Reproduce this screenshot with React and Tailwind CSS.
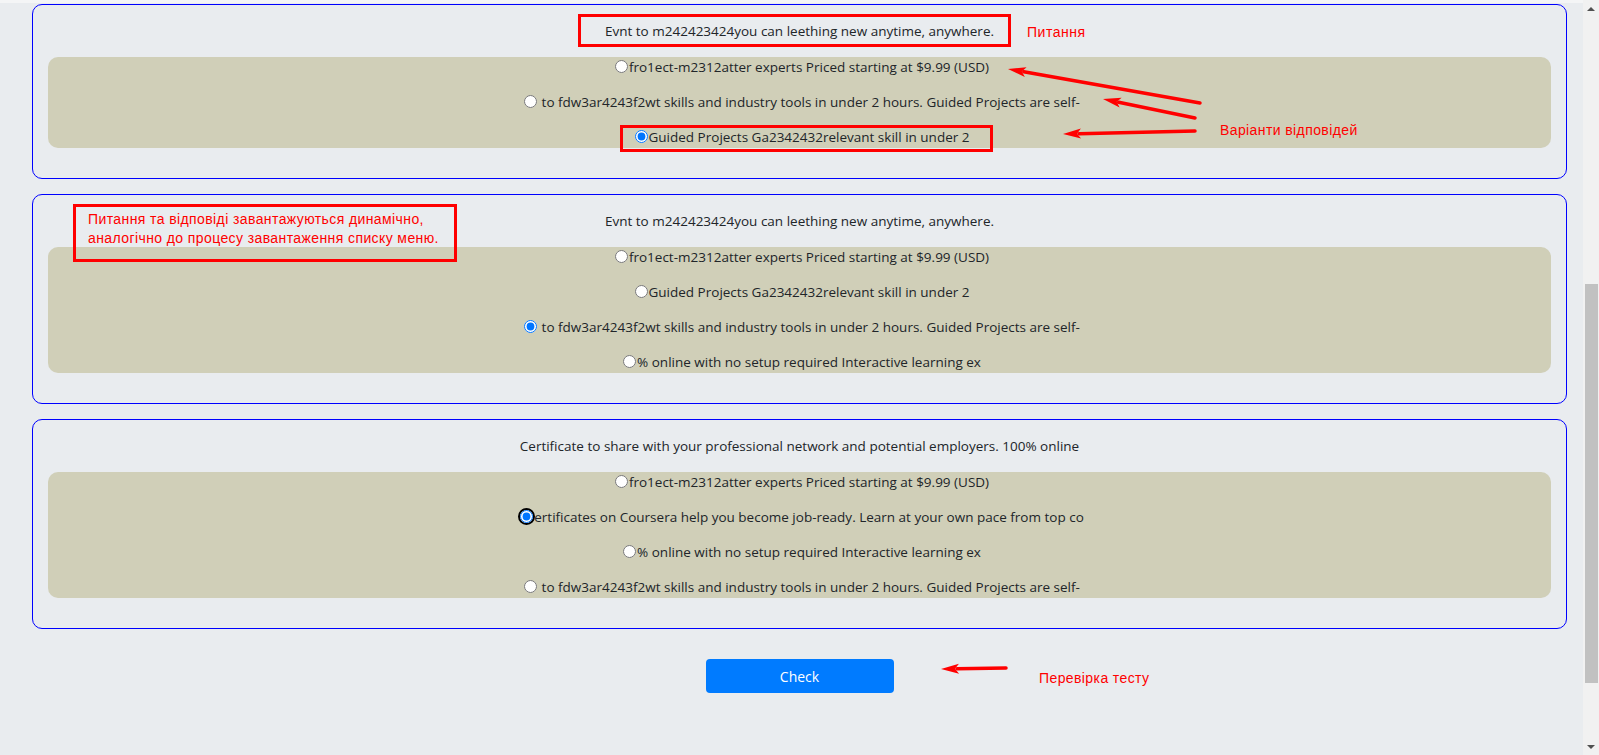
import { useState } from 'react'

const questions = [
  {
    id: 1,
    text: 'Evnt to m242423424you can leething new anytime, anywhere.',
    answers: [
      'fro1ect-m2312atter experts Priced starting at $9.99 (USD)',
      ' to fdw3ar4243f2wt skills and industry tools in under 2 hours. Guided Projects are self-',
      'Guided Projects Ga2342432relevant skill in under 2',
    ],
    checked: 2,
  },
  {
    id: 2,
    text: 'Evnt to m242423424you can leething new anytime, anywhere.',
    answers: [
      'fro1ect-m2312atter experts Priced starting at $9.99 (USD)',
      'Guided Projects Ga2342432relevant skill in under 2',
      ' to fdw3ar4243f2wt skills and industry tools in under 2 hours. Guided Projects are self-',
      '% online with no setup required Interactive learning ex',
    ],
    checked: 2,
  },
  {
    id: 3,
    text: 'Certificate to share with your professional network and potential employers. 100% online',
    answers: [
      'fro1ect-m2312atter experts Priced starting at $9.99 (USD)',
      'ertificates on Coursera help you become job-ready. Learn at your own pace from top co',
      '% online with no setup required Interactive learning ex',
      ' to fdw3ar4243f2wt skills and industry tools in under 2 hours. Guided Projects are self-',
    ],
    checked: 1,
    focused: 1,
  },
]

function Question({ q, value, onChange }) {
  return (
    <div className="border border-[#0000ff] rounded-[10px] px-[15px] pt-[16px] pb-[30px] mb-[15px]">
      <p className="text-center leading-[21px] mb-[15px]">{q.text}</p>
      <div className="bg-[#d0cfb8] rounded-[10px] flex flex-col gap-[14px]">
        {q.answers.map((a, i) => {
          const radio = (
            <input
              type="radio"
              name={`q${q.id}`}
              checked={value === i}
              onChange={() => onChange(i)}
              className={
                q.focused === i
                  ? 'block m-0 w-[13px] h-[13px] accent-[#0075ff]'
                  : 'm-0 ml-[5px] mr-[1px] align-[-1px] w-[13px] h-[13px] accent-[#0075ff]'
              }
            />
          )
          return (
            <label key={i} className="block text-center leading-[21px] whitespace-pre">
              {q.focused === i ? (
                <span className="inline-block ml-[3px] mr-[-1px] align-[-3px] rounded-full border-2 border-black">{radio}</span>
              ) : (
                radio
              )}
              {a}
            </label>
          )
        })}
      </div>
    </div>
  )
}

function Arrow({ x1, y1, x2, y2 }) {
  // tail (x1,y1) -> tip (x2,y2), filled head
  const dx = x2 - x1
  const dy = y2 - y1
  const len = Math.sqrt(dx * dx + dy * dy)
  const ux = dx / len
  const uy = dy / len
  const hx = x2 - ux * 18
  const hy = y2 - uy * 18
  const px = -uy * 5
  const py = ux * 5
  return (
    <g>
      <line x1={x1} y1={y1} x2={hx + ux * 2} y2={hy + uy * 2} stroke="#ff0000" strokeWidth="3.5" strokeLinecap="round" />
      <polygon points={`${x2},${y2} ${hx + px},${hy + py} ${hx + ux * 4},${hy + uy * 4} ${hx - px},${hy - py}`} fill="#ff0000" />
    </g>
  )
}

export default function App() {
  const [answers, setAnswers] = useState(questions.map((q) => q.checked))

  return (
    <div className="relative flex h-[755px] overflow-hidden bg-[#e9ecef] text-[13.5px] text-[#212529] font-['Open_Sans',sans-serif]">
      <div className="flex-1 flex flex-col">
        <div className="h-[3px] bg-[#f4f5f6]" />
        <div className="mt-[1px] pl-[32px] pr-[16px]">
          {questions.map((q, qi) => (
            <Question
              key={q.id}
              q={q}
              value={answers[qi]}
              onChange={(v) => setAnswers(answers.map((a, j) => (j === qi ? v : a)))}
            />
          ))}
          <div className="flex justify-center pt-[15px]">
            <button className="w-[188px] h-[34px] rounded-[4px] bg-[#007bff] text-white text-[14px]">Check</button>
          </div>
        </div>
      </div>

      <div className="w-[16px] bg-[#f1f1f1] flex flex-col items-center">
        <div className="h-[17px] flex items-center justify-center">
          <div className="w-0 h-0 border-l-[4px] border-r-[4px] border-b-[4px] border-l-transparent border-r-transparent border-b-[#505050]" />
        </div>
        <div className="h-[267px]" />
        <div className="w-[13px] h-[399px] bg-[#c1c1c1]" />
        <div className="flex-1" />
        <div className="h-[17px] flex items-center justify-center">
          <div className="w-0 h-0 border-l-[4px] border-r-[4px] border-t-[4px] border-l-transparent border-r-transparent border-t-[#505050]" />
        </div>
      </div>

      {/* annotations drawn over the screenshot */}
      <div className="absolute left-[578px] top-[14px] w-[433px] h-[33px] border-[3px] border-[#ff0000] pointer-events-none" />
      <div className="absolute left-[620px] top-[125px] w-[373px] h-[27px] border-[3px] border-[#ff0000] pointer-events-none" />
      <div className="absolute left-[73px] top-[204px] w-[384px] h-[58px] border-[3px] border-[#ff0000] pointer-events-none" />
      <div className="absolute left-[88px] top-[210px] text-[#ff0000] text-[14px] leading-[19px] tracking-[0.4px] font-['Liberation_Sans',sans-serif] pointer-events-none">
        <div>Питання та відповіді завантажуються динамічно,</div>
        <div>аналогічно до процесу завантаження списку меню.</div>
      </div>
      <div className="absolute left-[1027px] top-[22px] text-[#ff0000] text-[14px] tracking-[0.5px] font-['Liberation_Sans',sans-serif]">Питання</div>
      <div className="absolute left-[1220px] top-[120px] text-[#ff0000] text-[14px] tracking-[0.4px] font-['Liberation_Sans',sans-serif]">Варіанти відповідей</div>
      <div className="absolute left-[1039px] top-[668px] text-[#ff0000] text-[14px] tracking-[0.4px] font-['Liberation_Sans',sans-serif]">Перевірка тесту</div>
      <svg className="absolute inset-0 pointer-events-none" width="1599" height="755">
        <Arrow x1={1200} y1={103} x2={1008} y2={69} />
        <Arrow x1={1195} y1={118} x2={1103} y2={99} />
        <Arrow x1={1195} y1={131} x2={1063} y2={134} />
        <Arrow x1={1006} y1={668} x2={941} y2={669} />
      </svg>
    </div>
  )
}
